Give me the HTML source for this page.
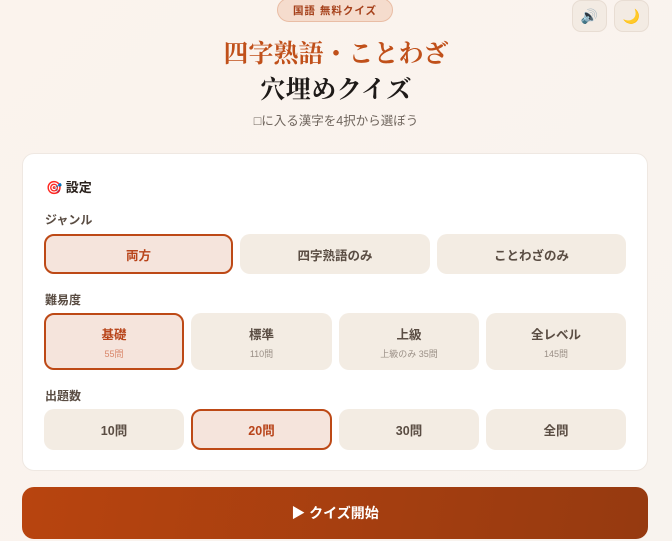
<!DOCTYPE html>
<html><head><meta charset="utf-8"><style>
*{box-sizing:border-box;margin:0;padding:0}
body{width:672px;height:541px;overflow:hidden;background:linear-gradient(135deg,#fbf3ed,#f8f3ee);font-family:"Liberation Sans","Noto Sans CJK JP",sans-serif;position:relative;color:#4a3b30}
.abs{position:absolute}
.badge{left:277px;top:-2px;width:116px;height:24px;border-radius:12px;background:#f5dccd;border:1px solid #e9bda5;color:#a5401a;font-size:10.5px;font-weight:bold;text-align:center;line-height:24px;letter-spacing:1px}
.ib{top:0;width:35px;height:32px;border-radius:9px;background:#f3ebe3;border:1px solid #e8ddd3;text-align:center;line-height:30px;font-size:14px}
.t1{top:34px;width:672px;text-align:center;font-family:"Noto Serif CJK SC","Liberation Serif",serif;font-size:25px;font-weight:bold;color:#c0501a;letter-spacing:0}
.t2{top:70px;width:672px;text-align:center;font-family:"Noto Serif CJK SC","Liberation Serif",serif;font-size:25px;font-weight:bold;color:#1e1a18;letter-spacing:0.5px}
.sub{top:110px;width:672px;text-align:center;font-size:12.5px;color:#6f655d}
.card{left:22px;top:153px;width:626px;height:318px;background:#fff;border:1px solid #efe8e2;border-radius:12px}
.h{font-size:13px;font-weight:bold;color:#2a211c}
.lb{font-size:12px;font-weight:bold;color:#5a4d43}
.b{background:#f3ece3;border-radius:10px;text-align:center;font-weight:bold;font-size:12.5px;color:#5a4d43;display:flex;flex-direction:column;justify-content:center;align-items:center}
.b.s{background:#f5e4dc;border:2px solid #bd4916;color:#b8441a}
.b small{font-size:9px;font-weight:normal;color:#9a8f86;margin-top:4px}
.b.s small{color:#d9866a}
.start{left:22px;top:487px;width:626px;height:52px;border-radius:12px;background:linear-gradient(100deg,#b8440f,#963a10);color:#fff;font-weight:bold;font-size:14px;text-align:center;line-height:52px}
</style></head><body>
<div class="abs badge">国語 無料クイズ</div>
<div class="abs ib" style="left:572px">🔊</div>
<div class="abs ib" style="left:614px">🌙</div>
<div class="abs t1">四字熟語・ことわざ</div>
<div class="abs t2">穴埋めクイズ</div>
<div class="abs sub">□に入る漢字を4択から選ぼう</div>
<div class="abs card"></div>
<div class="abs h" style="left:46px;top:177px">🎯 設定</div>
<div class="abs lb" style="left:45px;top:211px">ジャンル</div>
<div class="abs b s" style="left:44px;top:234px;width:189px;height:40px">両方</div>
<div class="abs b" style="left:240px;top:234px;width:190px;height:40px">四字熟語のみ</div>
<div class="abs b" style="left:437px;top:234px;width:189px;height:40px">ことわざのみ</div>
<div class="abs lb" style="left:45px;top:291px">難易度</div>
<div class="abs b s" style="left:44px;top:313px;width:140px;height:57px">基礎<small>55問</small></div>
<div class="abs b" style="left:191px;top:313px;width:141px;height:57px">標準<small>110問</small></div>
<div class="abs b" style="left:339px;top:313px;width:140px;height:57px">上級<small>上級のみ 35問</small></div>
<div class="abs b" style="left:486px;top:313px;width:140px;height:57px">全レベル<small>145問</small></div>
<div class="abs lb" style="left:45px;top:387px">出題数</div>
<div class="abs b" style="left:44px;top:409px;width:140px;height:41px">10問</div>
<div class="abs b s" style="left:191px;top:409px;width:141px;height:41px">20問</div>
<div class="abs b" style="left:339px;top:409px;width:140px;height:41px">30問</div>
<div class="abs b" style="left:486px;top:409px;width:140px;height:41px">全問</div>
<div class="abs start">▶ クイズ開始</div>
</body></html>
